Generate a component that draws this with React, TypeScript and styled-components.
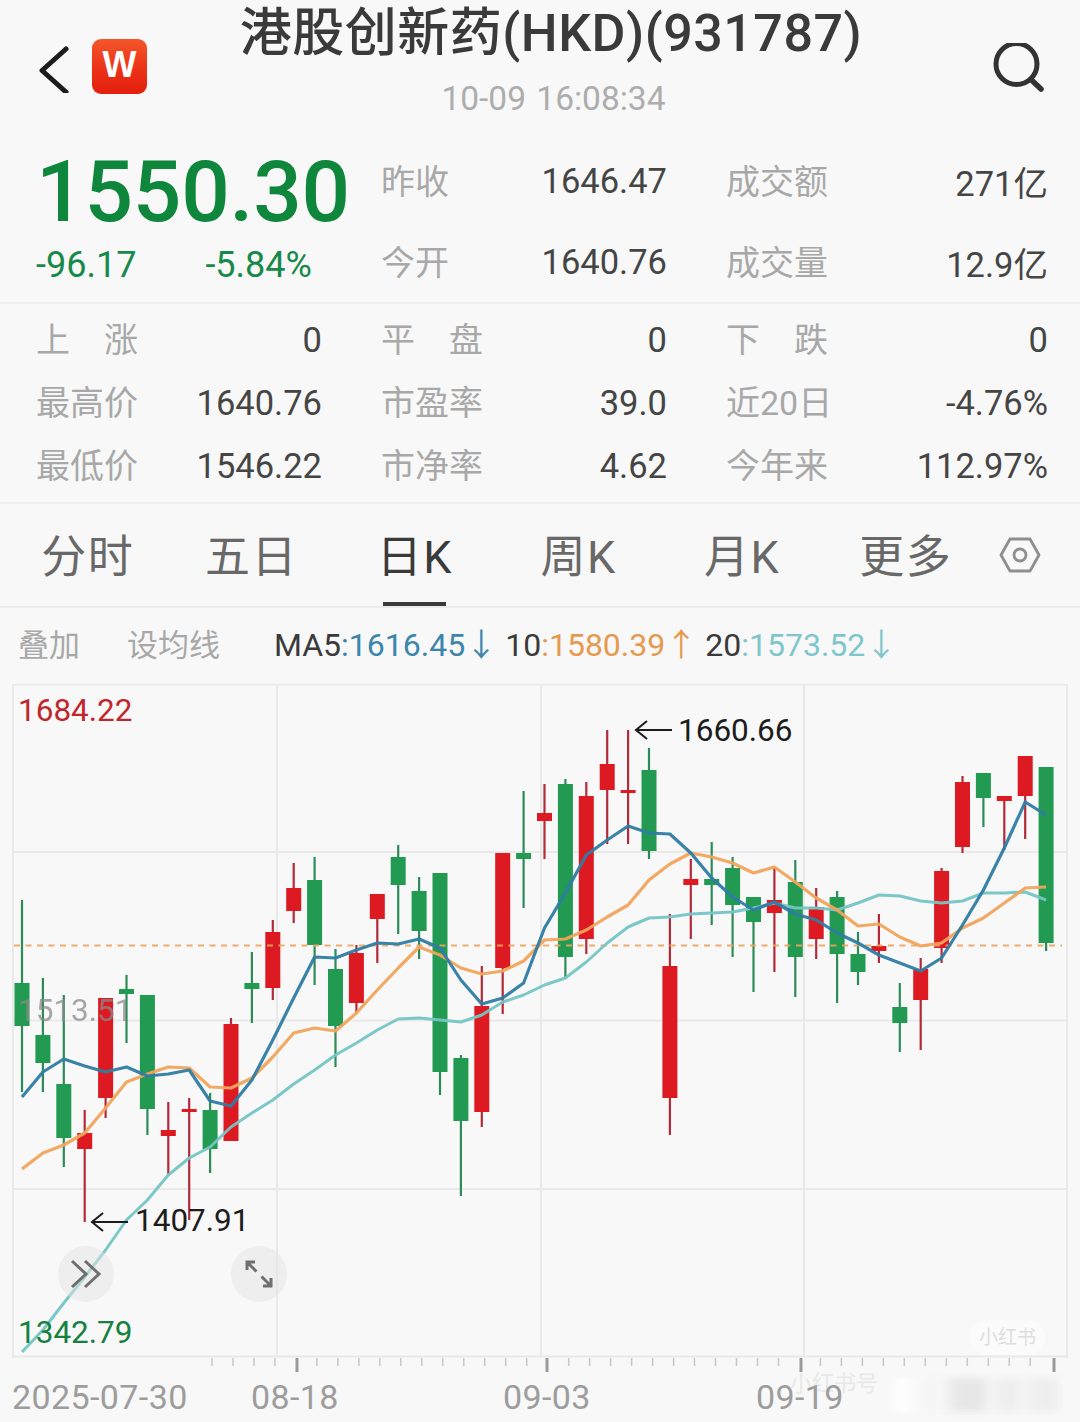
import React from 'react';
import styled, { createGlobalStyle } from 'styled-components';

const Global = createGlobalStyle`
  html, body { margin: 0; padding: 0; background: #f8f8f8; }
  body { width: 1080px; height: 1422px; overflow: hidden; font-family: Roboto, "Noto Sans CJK SC", sans-serif; }
`;

const Page = styled.div`
  width: 1080px;
  height: 1422px;
  background: #f8f8f8;
  display: flex;
  flex-direction: column;
  overflow: hidden;
`;

const Header = styled.header`
  position: relative;
  height: 144px;
  display: flex;
  flex-direction: column;
  align-items: center;
  flex-shrink: 0;
`;

const Title = styled.h1`
  margin: 3px 0 0 22px;
  font-size: 52px;
  line-height: 62px;
  font-weight: 500;
  color: #3a3a3a;
  white-space: nowrap;
  letter-spacing: 0.5px;
`;

const Clock = styled.div`
  margin: 14px 0 0 27px;
  font-size: 33.5px;
  line-height: 40px;
  color: #adadad;
  word-spacing: 2px;
`;

const HeaderLeft = styled.div`
  position: absolute;
  left: 38px;
  top: 39px;
  display: flex;
  align-items: center;
  gap: 21px;
`;

const HeaderRight = styled.div`
  position: absolute;
  right: 33px;
  top: 43px;
  display: flex;
`;

const Logo = styled.div`
  width: 55px;
  height: 55px;
  border-radius: 9px;
  background: linear-gradient(180deg, #f4562a 0%, #ea2f16 60%, #e3200e 100%);
  color: #fff;
  display: flex;
  align-items: center;
  justify-content: center;
  font-size: 36px;
  font-weight: 700;
  font-family: "Liberation Sans", sans-serif;
  padding-bottom: 3px;
  box-sizing: border-box;
`;

const QuoteGrid = styled.section<{ $h: number }>`
  display: grid;
  grid-template-columns: 286px 286px 322px;
  column-gap: 59px;
  padding-left: 36px;
  height: ${p => p.$h}px;
  flex-shrink: 0;
`;

const PriceCell = styled.div`
  display: flex;
  flex-direction: column;
  padding-top: 2px;
`;

const BigPrice = styled.div`
  font-size: 85.5px;
  line-height: 92px;
  font-weight: 500;
  color: #0e873d;
  letter-spacing: -0.2px;
  white-space: nowrap;
`;

const ChangeRow = styled.div`
  display: flex;
  gap: 69px;
  margin-top: 4px;
  font-size: 36px;
  line-height: 46px;
  color: #17894a;
  white-space: nowrap;
`;

const StatColumn = styled.div`
  display: flex;
  flex-direction: column;
`;

const StatRow = styled.div<{ $h: number }>`
  display: flex;
  justify-content: space-between;
  align-items: center;
  height: ${p => p.$h}px;
  font-size: 34.5px;
  flex-shrink: 0;
`;

const StatLabel = styled.span`
  color: #a8a8a8;
  font-size: 34px;
  white-space: pre;
  padding-bottom: 4px;
`;

const StatValue = styled.span`
  color: #454545;
`;

const Divider = styled.div<{ $top?: number; $bottom?: number }>`
  height: 2px;
  background: #efefef;
  margin-top: ${p => p.$top ?? 0}px;
  margin-bottom: ${p => p.$bottom ?? 0}px;
  flex-shrink: 0;
`;

const TabBar = styled.nav`
  display: flex;
  align-items: stretch;
  height: 104px;
  padding-left: 6px;
  flex-shrink: 0;
  border-bottom: 2px solid #ececec;
  box-sizing: border-box;
`;

const Tab = styled.div<{ $active?: boolean }>`
  position: relative;
  width: 163.6px;
  display: flex;
  justify-content: center;
  align-items: center;
  padding-bottom: 3px;
  box-sizing: border-box;
  font-size: 45px;
  letter-spacing: 1.500px;
  color: ${p => (p.$active ? '#3a3a3a' : '#686868')};
`;

const TabMark = styled.div`
  position: absolute;
  bottom: 0;
  left: 50%;
  margin-left: -32px;
  width: 63px;
  height: 4px;
  background: #3a3a3a;
`;

const TabIcon = styled.div`
  display: flex;
  align-items: center;
  margin-left: 11px;
`;

const MaBar = styled.div`
  display: flex;
  align-items: baseline;
  height: 76px;
  padding-left: 18px;
  font-size: 32px;
  line-height: 74px;
  flex-shrink: 0;
  white-space: nowrap;
`;

const MaTool = styled.span<{ $gap: number }>`
  color: #a8a8a8;
  font-size: 31px;
  margin-right: ${p => p.$gap}px;
`;

const MaKey = styled.span`
  color: #3a3a3a;
`;

const MaValue = styled.span<{ $c: string; $gap: number }>`
  color: ${p => p.$c};
  margin-right: ${p => p.$gap}px;
`;

const ChartArea = styled.div`
  position: relative;
  height: 691px;
  flex-shrink: 0;
`;

const ChartSvg = styled.svg`
  display: block;
`;

const AxisLabel = styled.div<{ $c: string; $x: number; $y: number; $o?: number }>`
  position: absolute;
  left: ${p => p.$x}px;
  top: ${p => p.$y}px;
  color: ${p => p.$c};
  opacity: ${p => p.$o ?? 1};
  font-size: 31.5px;
  line-height: 36px;
`;

const PointLabel = styled.div<{ $x: number; $y: number }>`
  position: absolute;
  left: ${p => p.$x}px;
  top: ${p => p.$y}px;
  color: #1c1c1c;
  font-size: 31.5px;
  line-height: 36px;
`;

const RoundButton = styled.div<{ $x: number; $y: number }>`
  position: absolute;
  left: ${p => p.$x}px;
  top: ${p => p.$y}px;
  width: 56px;
  height: 56px;
  border-radius: 50%;
  background: rgba(228, 228, 228, 0.5);
  display: flex;
  align-items: center;
  justify-content: center;
`;

const WatermarkPill = styled.div`
  position: absolute;
  left: 970px;
  top: 636px;
  width: 75px;
  height: 35px;
  border-radius: 18px;
  background: #fbfbfb;
  color: #dedede;
  font-size: 19px;
  line-height: 35px;
  text-align: center;
  white-space: nowrap;
`;

const DateAxis = styled.div`
  position: relative;
  flex: 1;
  font-size: 34px;
  letter-spacing: 0.4px;
  color: #9d9d9d;
`;

const DateLabel = styled.span<{ $x: number }>`
  position: absolute;
  top: 0;
  left: ${p => p.$x}px;
  line-height: 44px;
  white-space: nowrap;
`;

const Watermark = styled.span`
  position: absolute;
  left: 790px;
  top: -6px;
  font-size: 22px;
  line-height: 30px;
  letter-spacing: 0;
  color: #e8e8e8;
  white-space: nowrap;
`;

const Smudge = styled.div`
  position: absolute;
  left: 888px;
  top: 3px;
  width: 172px;
  height: 34px;
  filter: blur(3px);
  background: linear-gradient(
    90deg,
    #f8f8f8 0%,
    #ffffff 8%,
    #fbfbfb 14%,
    #f4f4f4 24%,
    #f8f8f8 30%,
    #e8e8e8 40%,
    #e6e6e6 52%,
    #f4f4f4 60%,
    #ededed 72%,
    #f4f4f4 78%,
    #ececec 92%,
    #f2f2f2 100%
  );
`;

type Candle = [number, number, number, number, 'r' | 'g'];

const candles: Candle[] = [
  [900, 983, 1026, 1092, 'g'], [978, 1035, 1063, 1092, 'g'], [995, 1084, 1138, 1167, 'g'],
  [1110, 1133, 1149, 1222, 'r'], [998, 998, 1098, 1118, 'r'], [975, 989, 994, 1043, 'g'],
  [995, 995, 1109, 1135, 'g'], [1102, 1130, 1136, 1175, 'r'], [1098, 1109, 1112, 1220, 'r'],
  [1093, 1110, 1149, 1173, 'g'], [1018, 1024, 1141, 1141, 'r'], [952, 983, 989, 1023, 'g'],
  [920, 932, 988, 1000, 'r'], [863, 888, 911, 923, 'r'], [857, 880, 945, 985, 'g'],
  [949, 969, 1026, 1067, 'g'], [945, 953, 1003, 1013, 'r'], [894, 894, 919, 963, 'r'],
  [845, 857, 885, 934, 'g'], [877, 891, 931, 959, 'g'], [873, 873, 1072, 1095, 'g'],
  [1055, 1058, 1121, 1196, 'g'], [966, 1006, 1112, 1127, 'r'], [853, 853, 968, 1014, 'r'],
  [791, 853, 859, 908, 'g'], [784, 813, 821, 859, 'r'], [779, 784, 957, 977, 'g'],
  [782, 796, 939, 954, 'r'], [730, 764, 790, 844, 'r'], [730, 790, 793, 844, 'r'],
  [748, 770, 851, 859, 'g'], [914, 966, 1098, 1135, 'r'], [859, 879, 885, 939, 'r'],
  [842, 879, 885, 925, 'g'], [857, 868, 905, 957, 'g'], [897, 897, 922, 992, 'g'],
  [868, 900, 913, 972, 'r'], [860, 882, 957, 997, 'g'], [888, 907, 939, 959, 'r'],
  [891, 897, 954, 1003, 'g'], [932, 954, 972, 985, 'g'], [914, 946, 951, 963, 'r'],
  [983, 1007, 1023, 1052, 'g'], [958, 969, 1000, 1050, 'r'], [868, 871, 948, 963, 'r'],
  [776, 782, 847, 853, 'r'], [773, 773, 798, 827, 'g'], [796, 796, 801, 850, 'r'],
  [756, 756, 796, 839, 'r'], [767, 767, 943, 951, 'g'],
];

const cx = (i: number) => 22 + i * 20.9;

const ma5 = [1097,1072,1059,1066,1072,1067,1076,1074,1070,1101,1106,1080,1040,998,957,958,950,943,944,939,948,980,1004,998,983,928,893,855,840,826,833,834,853,878,897,910,902,914,920,933,943,955,963,971,958,925,890,848,802,815];
const ma10 = [1169,1153,1145,1133,1108,1082,1074,1067,1068,1087,1088,1078,1057,1033,1028,1031,1013,990,968,947,955,968,974,971,961,940,939,930,917,905,880,864,853,857,863,873,867,882,898,910,926,924,937,946,943,928,918,903,888,887];
const ma20 = [1352,1330,1303,1277,1250,1220,1200,1175,1158,1147,1127,1113,1100,1084,1070,1055,1043,1030,1019,1018,1020,1022,1015,1002,995,985,978,962,943,927,918,917,914,913,912,908,903,908,908,910,903,895,896,901,903,901,893,893,892,900];

const toPoints = (ys: number[]) => ys.map((y, i) => `${cx(i).toFixed(1)},${y}`).join(' ');

const minorTicks = Array.from({ length: 41 }, (_, i) => 212 + i * 20.98).filter(
  x => ![297, 547, 801, 1054].some(m => Math.abs(m - x) < 10)
);

const Arrow: React.FC<{ x: number; y: number }> = ({ x, y }) => (
  <g fill="none" stroke="#1c1c1c" strokeWidth="2">
    <path d={`M${x} ${y}H${x + 36}`} />
    <path d={`M${x + 11} ${y - 9}L${x} ${y}L${x + 11} ${y + 9}`} />
  </g>
);

export default function App() {
  return (
    <Page>
      <Global />
      <Header>
        <HeaderLeft>
          <svg width="33" height="52" viewBox="0 0 33 52" fill="none">
            <path d="M28 8L4 29.500L28 51" stroke="#1c1c1c" strokeWidth="5" strokeLinecap="round" strokeLinejoin="round" />
          </svg>
          <Logo>W</Logo>
        </HeaderLeft>
        <Title>港股创新药(HKD)(931787)</Title>
        <Clock>10-09 16:08:34</Clock>
        <HeaderRight>
          <svg width="54" height="54" viewBox="0 0 54 54" fill="none">
            <circle cx="23.500" cy="21" r="20.500" stroke="#333" strokeWidth="5" />
            <path d="M38.500 37L48 46" stroke="#333" strokeWidth="5.500" strokeLinecap="round" />
          </svg>
        </HeaderRight>
      </Header>

      <QuoteGrid $h={156}>
        <PriceCell>
          <BigPrice>1550.30</BigPrice>
          <ChangeRow>
            <span>-96.17</span>
            <span>-5.84%</span>
          </ChangeRow>
        </PriceCell>
        <StatColumn>
          <StatRow $h={74}><StatLabel>昨收</StatLabel><StatValue>1646.47</StatValue></StatRow>
          <StatRow $h={88}><StatLabel>今开</StatLabel><StatValue>1640.76</StatValue></StatRow>
        </StatColumn>
        <StatColumn>
          <StatRow $h={74}><StatLabel>成交额</StatLabel><StatValue>271亿</StatValue></StatRow>
          <StatRow $h={88}><StatLabel>成交量</StatLabel><StatValue>12.9亿</StatValue></StatRow>
        </StatColumn>
      </QuoteGrid>

      <Divider $top={2} $bottom={4} />

      <QuoteGrid $h={189}>
        <StatColumn>
          <StatRow $h={63}><StatLabel>上　涨</StatLabel><StatValue>0</StatValue></StatRow>
          <StatRow $h={63}><StatLabel>最高价</StatLabel><StatValue>1640.76</StatValue></StatRow>
          <StatRow $h={63}><StatLabel>最低价</StatLabel><StatValue>1546.22</StatValue></StatRow>
        </StatColumn>
        <StatColumn>
          <StatRow $h={63}><StatLabel>平　盘</StatLabel><StatValue>0</StatValue></StatRow>
          <StatRow $h={63}><StatLabel>市盈率</StatLabel><StatValue>39.0</StatValue></StatRow>
          <StatRow $h={63}><StatLabel>市净率</StatLabel><StatValue>4.62</StatValue></StatRow>
        </StatColumn>
        <StatColumn>
          <StatRow $h={63}><StatLabel>下　跌</StatLabel><StatValue>0</StatValue></StatRow>
          <StatRow $h={63}><StatLabel>近20日</StatLabel><StatValue>-4.76%</StatValue></StatRow>
          <StatRow $h={63}><StatLabel>今年来</StatLabel><StatValue>112.97%</StatValue></StatRow>
        </StatColumn>
      </QuoteGrid>

      <Divider $top={5} />

      <TabBar>
        <Tab>分时</Tab>
        <Tab>五日</Tab>
        <Tab $active>日K<TabMark /></Tab>
        <Tab>周K</Tab>
        <Tab>月K</Tab>
        <Tab>更多</Tab>
        <TabIcon>
          <svg width="42" height="36" viewBox="0 0 42 36" fill="none" stroke="#8e8e8e" strokeWidth="2.800">
            <path d="M11 2H31L40 18L31 34H11L2 18Z" strokeLinejoin="round" />
            <circle cx="21" cy="18" r="6" />
          </svg>
        </TabIcon>
      </TabBar>

      <MaBar>
        <MaTool $gap={47}>叠加</MaTool>
        <MaTool $gap={54}>设均线</MaTool>
        <MaKey>MA5</MaKey>
        <MaValue $c="#3b86ac" $gap={8}>:1616.45↓</MaValue>
        <MaKey>10</MaKey>
        <MaValue $c="#e69a4f" $gap={8}>:1580.39↑</MaValue>
        <MaKey>20</MaKey>
        <MaValue $c="#7fc6cc" $gap={0}>:1573.52↓</MaValue>
      </MaBar>

      <ChartArea>
        <ChartSvg width="1080" height="691" viewBox="0 684 1080 691">
          <g stroke="#e9e9e9" strokeWidth="2" fill="none">
            <rect x="13" y="684.500" width="1054" height="672" />
            <path d="M13 852H1067M13 1020.500H1067M13 1189H1067" />
            <path d="M277 684V1357M541 684V1357M804 684V1357" />
          </g>
          <g stroke="#c7c7c7" strokeWidth="1.500">
            {minorTicks.map(x => (
              <path key={x} d={`M${x.toFixed(1)} 1358V1366`} />
            ))}
          </g>
          <g stroke="#9a9a9a" strokeWidth="3">
            {[297, 547, 801, 1054].map(x => (
              <path key={x} d={`M${x} 1358V1372`} />
            ))}
          </g>
          {candles.map(([high, top, bottom, low, k], i) => {
            const x = cx(i);
            const fill = k === 'r' ? '#dd1a22' : '#229a52';
            const wick = k === 'r' ? '#b32a38' : '#2b8c58';
            return (
              <g key={i}>
                <path d={`M${x} ${high}V${low}`} stroke={wick} strokeWidth="2.200" />
                <rect x={x - 7.500} y={top} width="15" height={bottom - top} fill={fill} />
              </g>
            );
          })}
          <path d="M14 945.500H1062" stroke="#eda45f" strokeWidth="2" strokeDasharray="6 5.500" opacity="0.9" />
          <polyline points={toPoints(ma20)} fill="none" stroke="#75c5c6" strokeWidth="3" strokeLinejoin="round" opacity="0.95" />
          <polyline points={toPoints(ma10)} fill="none" stroke="#f0a45c" strokeWidth="3.200" strokeLinejoin="round" opacity="0.95" />
          <polyline points={toPoints(ma5)} fill="none" stroke="#2f7ca3" strokeWidth="3.200" strokeLinejoin="round" opacity="0.95" />
          <Arrow x={636} y={730} />
          <Arrow x={92} y={1222} />
        </ChartSvg>
        <AxisLabel $c="#c0262e" $x={18} $y={9}>1684.22</AxisLabel>
        <AxisLabel $c="#8a8a8a" $x={18} $y={309} $o={0.75}>1513.51</AxisLabel>
        <AxisLabel $c="#15803f" $x={18} $y={631}>1342.79</AxisLabel>
        <PointLabel $x={678} $y={29}>1660.66</PointLabel>
        <PointLabel $x={135} $y={519}>1407.91</PointLabel>
        <RoundButton $x={58} $y={562}>
          <svg width="34" height="30" viewBox="0 0 34 30" fill="none" stroke="#6f6f6f" strokeWidth="3">
            <path d="M3 2L17 15L3 28M16 2L30 15L16 28" />
          </svg>
        </RoundButton>
        <RoundButton $x={231} $y={562}>
          <svg width="30" height="30" viewBox="0 0 30 30" fill="none" stroke="#6f6f6f" strokeWidth="3">
            <path d="M3 11V3H11M3 3L12.500 12.500M17.500 17.500L27 27M27 19V27H19" />
          </svg>
        </RoundButton>
        <WatermarkPill>小红书</WatermarkPill>
      </ChartArea>

      <DateAxis>
        <Watermark>小红书号</Watermark>
        <Smudge />
        <DateLabel $x={12}>2025-07-30</DateLabel>
        <DateLabel $x={251}>08-18</DateLabel>
        <DateLabel $x={503}>09-03</DateLabel>
        <DateLabel $x={756}>09-19</DateLabel>
      </DateAxis>
    </Page>
  );
}
